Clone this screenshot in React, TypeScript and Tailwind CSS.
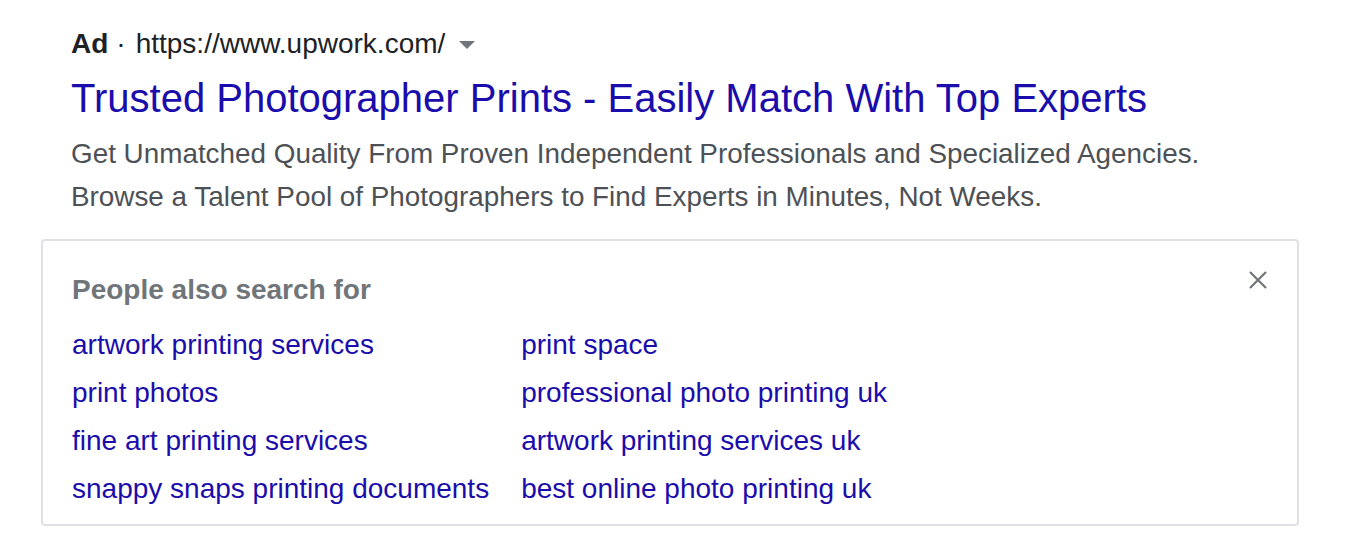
const left = [
  "artwork printing services",
  "print photos",
  "fine art printing services",
  "snappy snaps printing documents",
];

const right = [
  "print space",
  "professional photo printing uk",
  "artwork printing services uk",
  "best online photo printing uk",
];

function App() {
  return (
    <div className="w-[1350px] h-[560px] bg-white font-['Liberation_Sans',Arial,sans-serif] pl-[71px] pr-[51px] pt-[28px]">
      {/* ad header */}
      <div className="flex items-center text-[28px] leading-[32px] text-[#202124]">
        <span className="font-bold">Ad</span>
        <span className="ml-[8px] mr-[10px]">·</span>
        <span>https://www.upwork.com/</span>
        <svg width="16" height="10" viewBox="0 0 16 10" className="ml-[14px] mt-[2px]">
          <path d="M0 1 L16 1 L8 9 Z" fill="#70757a" />
        </svg>
      </div>

      <a className="block mt-[14px] text-[40px] leading-[48px] text-[#1a0dab]" href="#">
        Trusted Photographer Prints - Easily Match With Top Experts
      </a>

      <div className="mt-[10px] text-[27.85px] leading-[43px] text-[#4d5156]">
        <div>Get Unmatched Quality From Proven Independent Professionals and Specialized Agencies.</div>
        <div>Browse a Talent Pool of Photographers to Find Experts in Minutes, Not Weeks.</div>
      </div>

      <div className="-ml-[30px] mt-[21px] border-2 border-[#dfe1e5] rounded-[4px] pl-[29px] pr-[30px] pt-[33px] pb-[11px] relative">
        <button className="absolute right-[28px] top-[28px] text-[#70757a]">
          <svg width="22" height="22" viewBox="0 0 22 22">
            <path d="M3 3 L19 19 M19 3 L3 19" stroke="#70757a" strokeWidth="2.2" fill="none" />
          </svg>
        </button>
        <div className="text-[28px] leading-[32px] font-bold text-[#70757a]">People also search for</div>
        <div className="mt-[15px] flex gap-[32px]">
          <div className="flex flex-col">
            {left.map((t) => (
              <a key={t} href="#" className="text-[28px] leading-[48px] text-[#1a0dab]">
                {t}
              </a>
            ))}
          </div>
          <div className="flex flex-col">
            {right.map((t) => (
              <a key={t} href="#" className="text-[28px] leading-[48px] text-[#1a0dab]">
                {t}
              </a>
            ))}
          </div>
        </div>
      </div>
    </div>
  );
}

export default App;
